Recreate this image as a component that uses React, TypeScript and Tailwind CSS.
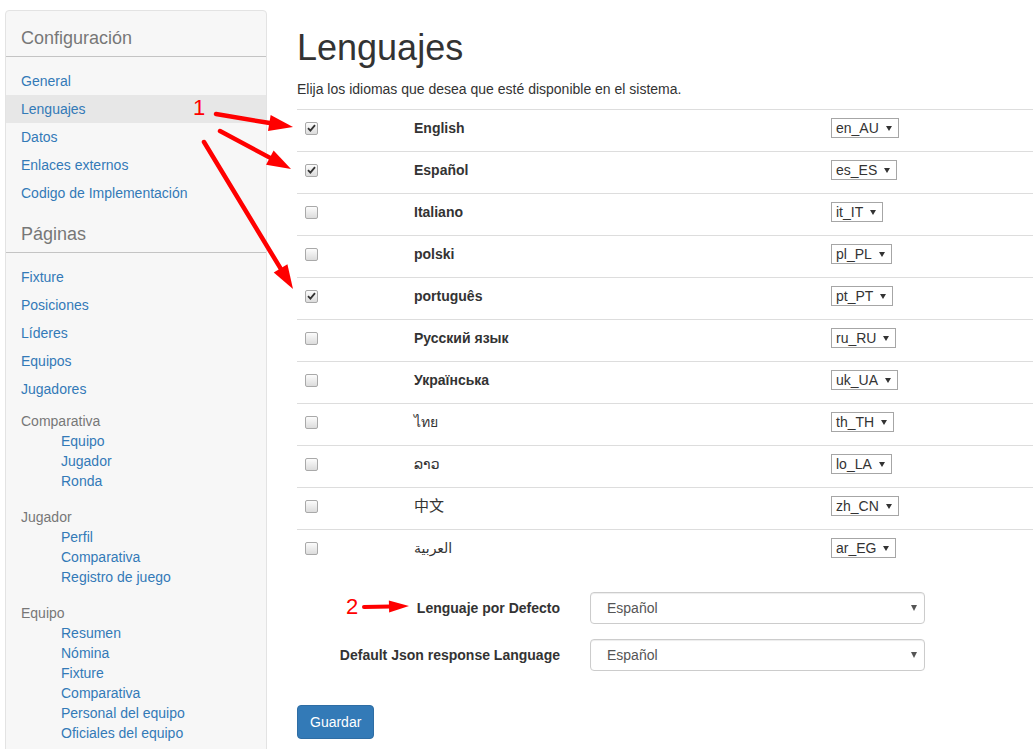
import React from "react";

const FONT = { fontFamily: '"Liberation Sans", Arial, "DejaVu Sans", "Noto Sans CJK SC", sans-serif' };

type Lang = { name: string; code: string; checked: boolean; plain?: boolean; cjk?: boolean };
const langs: Lang[] = [
  { name: "English", code: "en_AU", checked: true },
  { name: "Español", code: "es_ES", checked: true },
  { name: "Italiano", code: "it_IT", checked: false },
  { name: "polski", code: "pl_PL", checked: false },
  { name: "português", code: "pt_PT", checked: true },
  { name: "Русский язык", code: "ru_RU", checked: false },
  { name: "Українська", code: "uk_UA", checked: false },
  { name: "ไทย", code: "th_TH", checked: false, plain: true },
  { name: "ລາວ", code: "lo_LA", checked: false, plain: true },
  { name: "中文", code: "zh_CN", checked: false, plain: true, cjk: true },
  { name: "العربية", code: "ar_EG", checked: false, plain: true },
];

function Checkbox({ checked }: { checked: boolean }) {
  return (
    <span className="flex h-[13px] w-[13px] items-center justify-center rounded-[2px] border border-[#a9a9a9] bg-gradient-to-b from-[#fcfcfc] to-[#dcdcdc]">
      {checked && (
        <svg width="9" height="8" viewBox="0 0 9 8">
          <path d="M1 4.2 L3.4 6.6 L8 1.2" fill="none" stroke="#333" strokeWidth="1.8" />
        </svg>
      )}
    </span>
  );
}

function Caret({ color = "#333", w = 7, h = 6 }: { color?: string; w?: number; h?: number }) {
  return (
    <svg width={w} height={h} viewBox={`0 0 ${w} ${h}`}>
      <path d={`M0 0 H${w} L${w / 2} ${h} Z`} fill={color} />
    </svg>
  );
}

function SmallSelect({ value }: { value: string }) {
  return (
    <span className="flex h-[20px] items-center gap-[7px] border border-[#a6a6a6] bg-white pl-[4px] pr-[6px] text-[14px] leading-[18px] text-[#333]">
      {value}
      <Caret w={6} h={5} />
    </span>
  );
}

function BigSelect({ value }: { value: string }) {
  return (
    <div className="flex h-[32px] w-[335px] items-center justify-between rounded-[4px] border border-[#ccc] bg-white pl-[16px] pr-[7px] text-[14px] text-[#555] shadow-[inset_0_1px_1px_rgba(0,0,0,0.075)]">
      <span>{value}</span>
      <Caret color="#555" w={6} h={6} />
    </div>
  );
}

function Arrow({ x1, y1, x2, y2, head = 24, half = 8, w = 4.5 }: { x1: number; y1: number; x2: number; y2: number; head?: number; half?: number; w?: number }) {
  const dx = x2 - x1;
  const dy = y2 - y1;
  const len = Math.sqrt(dx * dx + dy * dy);
  const ux = dx / len;
  const uy = dy / len;
  const bx = x2 - ux * head;
  const by = y2 - uy * head;
  const px = -uy;
  const py = ux;
  const pts = `${x2},${y2} ${bx + px * half},${by + py * half} ${bx - px * half},${by - py * half}`;
  return (
    <g>
      <line x1={x1} y1={y1} x2={bx + ux * 2} y2={by + uy * 2} stroke="#ff0000" strokeWidth={w} strokeLinecap="round" />
      <polygon points={pts} fill="#ff0000" />
    </g>
  );
}

const Link = ({ children }: { children: React.ReactNode }) => (
  <div className="text-[14px] leading-[20px] text-[#337ab7]">{children}</div>
);

export default function App() {
  const top1 = ["General", "Lenguajes", "Datos", "Enlaces externos", "Codigo de Implementación"];
  const top2 = ["Fixture", "Posiciones", "Líderes", "Equipos", "Jugadores"];
  const groups: { label: string; items: string[] }[] = [
    { label: "Comparativa", items: ["Equipo", "Jugador", "Ronda"] },
    { label: "Jugador", items: ["Perfil", "Comparativa", "Registro de juego"] },
    { label: "Equipo", items: ["Resumen", "Nómina", "Fixture", "Comparativa", "Personal del equipo", "Oficiales del equipo"] },
  ];

  return (
    <div className="relative h-[749px] w-[1033px] overflow-hidden bg-white text-[#333]" style={FONT}>
      <div className="flex pl-[5px] pt-[10px]">
        {/* Sidebar */}
        <aside className="w-[262px] shrink-0 rounded-[4px] border border-[#e3e3e3] bg-[#f7f7f7] pb-[40px]">
          <div className="border-b border-[#c4c4c4] pb-[8px] pl-[15px] pt-[17px] text-[18px] leading-[20px] text-[#777]">
            Configuración
          </div>
          <div className="mt-[10px]">
            {top1.map((t) => (
              <div
                key={t}
                className={`flex h-[28px] items-center pl-[15px] text-[14px] text-[#337ab7] ${t === "Lenguajes" ? "bg-[#e7e7e7]" : ""}`}
              >
                {t}
              </div>
            ))}
          </div>
          <div className="border-b border-[#c4c4c4] pb-[8px] pl-[15px] pt-[17px] text-[18px] leading-[20px] text-[#777]">
            Páginas
          </div>
          <div className="mt-[10px]">
            {top2.map((t) => (
              <div key={t} className="flex h-[28px] items-center pl-[15px] text-[14px] text-[#337ab7]">
                {t}
              </div>
            ))}
          </div>
          <div className="mt-[8px] flex flex-col gap-[16px] pl-[15px]">
            {groups.map((g) => (
              <div key={g.label}>
                <div className="text-[14px] leading-[20px] text-[#777]">{g.label}</div>
                <div className="pl-[40px]">
                  {g.items.map((i) => (
                    <Link key={i}>{i}</Link>
                  ))}
                </div>
              </div>
            ))}
          </div>
        </aside>

        {/* Main */}
        <main className="ml-[30px] flex-1">
          <h1 className="mt-[18px] text-[36px] font-normal leading-[40px] text-[#333]">Lenguajes</h1>
          <p className="mt-[11px] text-[14px] leading-[20px] text-[#333]">
            Elija los idiomas que desea que esté disponible en el sistema.
          </p>
          <div className="mt-[10px]">
            {langs.map((l) => (
              <div key={l.code} className="flex h-[42px] items-start border-t border-[#ddd] pt-[8px]">
                <div className="flex h-[20px] w-[109px] items-center pl-[8px]">
                  <Checkbox checked={l.checked} />
                </div>
                <div
                  className={`flex h-[20px] w-[417px] items-center pl-[8px] text-[#333] ${l.plain ? "font-normal" : "font-bold"} ${l.cjk ? "text-[15px]" : "text-[14px]"}`}
                >
                  {l.name}
                </div>
                <div className="flex h-[20px] items-center pl-[8px]">
                  <SmallSelect value={l.code} />
                </div>
              </div>
            ))}
          </div>

          <div className="mt-[21px] flex flex-col gap-[15px]">
            <div className="flex items-center">
              <label className="w-[263px] text-right text-[14px] font-bold text-[#333]">Lenguaje por Defecto</label>
              <div className="ml-[30px]">
                <BigSelect value="Español" />
              </div>
            </div>
            <div className="flex items-center">
              <label className="w-[263px] text-right text-[14px] font-bold text-[#333]">Default Json response Language</label>
              <div className="ml-[30px]">
                <BigSelect value="Español" />
              </div>
            </div>
          </div>

          <button className="mt-[34px] h-[34px] rounded-[4px] border border-[#2e6da4] bg-[#337ab7] px-[12px] text-[14px] text-white">
            Guardar
          </button>
        </main>
      </div>

      {/* Annotations */}
      <span className="pointer-events-none absolute left-[193px] top-[96px] text-[22px] leading-[24px] text-[#ff0000]">1</span>
      <span className="pointer-events-none absolute left-[346px] top-[595px] text-[22px] leading-[24px] text-[#ff0000]">2</span>
      <svg className="pointer-events-none absolute left-0 top-0" width="1033" height="749">
        <Arrow x1={216} y1={114} x2={293} y2={127} />
        <Arrow x1={220} y1={131} x2={291} y2={169} />
        <Arrow x1={204} y1={142} x2={293} y2={289} />
        <Arrow x1={364} y1={607} x2={409} y2={606} head={20} half={6} w={4} />
      </svg>
    </div>
  );
}
